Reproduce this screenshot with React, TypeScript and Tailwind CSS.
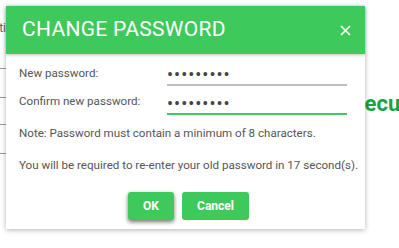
import React from "react";

const green = "bg-[#3ec95b]";

const App: React.FC = () => {
  return (
    <div
      className="relative w-[399px] h-[248px] overflow-hidden bg-white"
      style={{ fontFamily: "Roboto, 'Liberation Sans', sans-serif" }}
    >
      {/* page behind the dialog */}
      <div className="flex h-full">
        <div className="w-[6px] overflow-hidden shrink-0">
          <div className="flex flex-col items-end w-[6px]">
            <div className="h-[21px]" />
            <div className="text-[12px] text-[#666] whitespace-nowrap leading-[14px]">Opti</div>
            <div className="h-[34px] w-full border-b border-[#999]" />
            <div className="h-[29px] w-full border-b border-[#999]" />
            <div className="h-[27px] w-full border-b border-[#999]" />
            <div className="h-[29px] w-full border-b border-[#999]" />
          </div>
        </div>
        <div className="flex-1" />
        <div className="w-[48px] shrink-0 pt-[91px] whitespace-nowrap text-[22px] font-bold text-[#17a33d] leading-[26px]">
          Secure
        </div>
      </div>

      {/* change password dialog */}
      <div className="absolute left-[6px] top-[6px] w-[359px] h-[223px] bg-white shadow-[0_1px_5px_rgba(0,0,0,0.3)]">
        <div className={`${green} h-[48px] flex items-center justify-between pl-[16px] pr-[14px] shadow-[0_1px_3px_rgba(0,0,0,0.25)]`}>
          <span className="text-white text-[21px] tracking-[0.3px]">CHANGE PASSWORD</span>
          <svg width="11" height="11" viewBox="0 0 11 11">
            <path d="M1 1L10 10M10 1L1 10" stroke="white" strokeWidth="1.6" />
          </svg>
        </div>

        <div className="pl-[13px] pt-[11px] text-[11.6px] text-[#555] whitespace-nowrap">
          <div className="grid grid-cols-[148px_180px] gap-y-[7px] items-end">
            <label className="pb-[4px]">New password:</label>
            <input
              type="password"
              readOnly
              defaultValue="123456789"
              className="h-[21px] w-[180px] border-b-2 border-[#bdbdbd] outline-none text-[18px] tracking-[1px] text-[#444] px-0"
            />
            <label className="pb-[4px]">Confirm new password:</label>
            <input
              type="password"
              readOnly
              defaultValue="123456789"
              className="h-[21px] w-[180px] border-b-2 border-[#3ec95b] outline-none text-[18px] tracking-[1px] text-[#444] px-0"
            />
          </div>
          <p className="mt-[10px] leading-[16px]">Note: Password must contain a minimum of 8 characters.</p>
          <p className="mt-[16px] leading-[16px]">You will be required to re-enter your old password in 17 second(s).</p>
          <div className="mt-[19px] flex gap-[8px] pl-[109px]">
            <button className={`${green} w-[46px] h-[28px] rounded-[3px] text-white font-bold text-[12px] shadow-[0_2px_4px_rgba(0,0,0,0.55)]`}>
              OK
            </button>
            <button className={`${green} w-[67px] h-[28px] rounded-[3px] text-white font-bold text-[12px]`}>
              Cancel
            </button>
          </div>
        </div>
      </div>
    </div>
  );
};

export default App;
